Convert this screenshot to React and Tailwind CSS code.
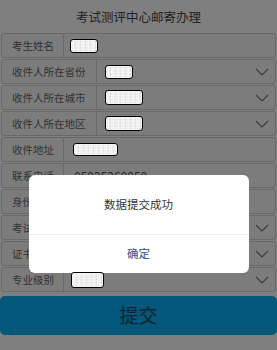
import React from "react";

const ROWS = [
  { label: "考生姓名", w: 62, redact: { w: 28, h: 14, ml: 6 } },
  { label: "收件人所在省份", w: 95, select: true, redact: { w: 28, h: 14, ml: 8 } },
  { label: "收件人所在城市", w: 95, select: true, redact: { w: 38, h: 15, ml: 8 } },
  { label: "收件人所在地区", w: 95, select: true, redact: { w: 38, h: 15, ml: 8 } },
  { label: "收件地址", w: 62, redact: { w: 45, h: 13, ml: 9 } },
  { label: "联系电话", w: 62, text: "05025260050" },
  { label: "身份证号", w: 62 },
  { label: "考试名称", w: 62, select: true },
  { label: "证书名称", w: 62, select: true, right: "全部选项" },
  { label: "专业级别", w: 62, select: true, redact: { w: 33, h: 16, ml: 7 } },
];

function Chevron() {
  return (
    <svg width="14" height="8" viewBox="0 0 14 8" className="shrink-0 mr-[6px] ml-auto">
      <path d="M1 1 L7 7 L13 1" fill="none" stroke="#777" strokeWidth="1.2" />
    </svg>
  );
}

function Redact({ w, h, ml }) {
  return (
    <span
      className="relative z-20 block rounded-[3px] border-[1.5px] border-black bg-[#f4f4f4] overflow-hidden"
      style={{ width: w, height: h, marginLeft: ml }}
    >
      <span className="absolute inset-[1px] bg-[repeating-linear-gradient(90deg,#d8d8d8_0px,#fafafa_2px,#bdbdbd_3px,#f5f5f5_5px)] opacity-70" />
      <span className="absolute inset-[1px] bg-[repeating-linear-gradient(0deg,#ffffff00_0px,#ffffffaa_2px,#ffffff00_3px)]" />
    </span>
  );
}

function Row({ row }) {
  return (
    <div className="flex h-[25px] mb-[1px] mx-[1px] rounded-[3px] border border-[#d0d0d0] bg-[#f8f8f8]">
      <div
        className="shrink-0 flex items-center pl-[10px] whitespace-nowrap border-r border-[#d0d0d0] text-[10.5px] text-[#666]"
        style={{ width: row.w }}
      >
        {row.label}
      </div>
      <div className="flex-1 flex items-center">
        {row.redact && <Redact {...row.redact} />}
        {row.text && <span className="ml-[10px] text-[12px] text-[#555]">{row.text}</span>}
        {row.right && <span className="ml-auto mr-[4px] text-[11px] text-[#333]">{row.right}</span>}
        {row.select && <Chevron />}
      </div>
    </div>
  );
}

export default function App() {
  return (
    <div className="relative w-[277px] h-[350px] overflow-hidden bg-white font-['Noto_Sans_CJK_SC',sans-serif]">
      <h1 className="h-[33px] flex items-center justify-center pt-[2px] text-[12.5px] text-[#444]">
        考试测评中心邮寄办理
      </h1>

      {ROWS.map((r) => (
        <Row key={r.label} row={r} />
      ))}

      <button className="mt-[3px] w-full h-[39px] rounded-[5px] bg-[#05aff6] text-[19px] text-[#1a4a60]">
        提交
      </button>

      <div className="fixed inset-0 z-10 bg-black/50 flex justify-center pt-[175px]">
        <div className="w-[220px] h-[98px] rounded-[6px] bg-white flex flex-col">
          <div className="h-[60px] flex items-center justify-center text-[11.5px] text-[#333] border-b border-[#eeeeee]">
            数据提交成功
          </div>
          <div className="flex-1 flex items-center justify-center text-[11.5px] font-medium text-[#55639a]">
            确定
          </div>
        </div>
      </div>
    </div>
  );
}
